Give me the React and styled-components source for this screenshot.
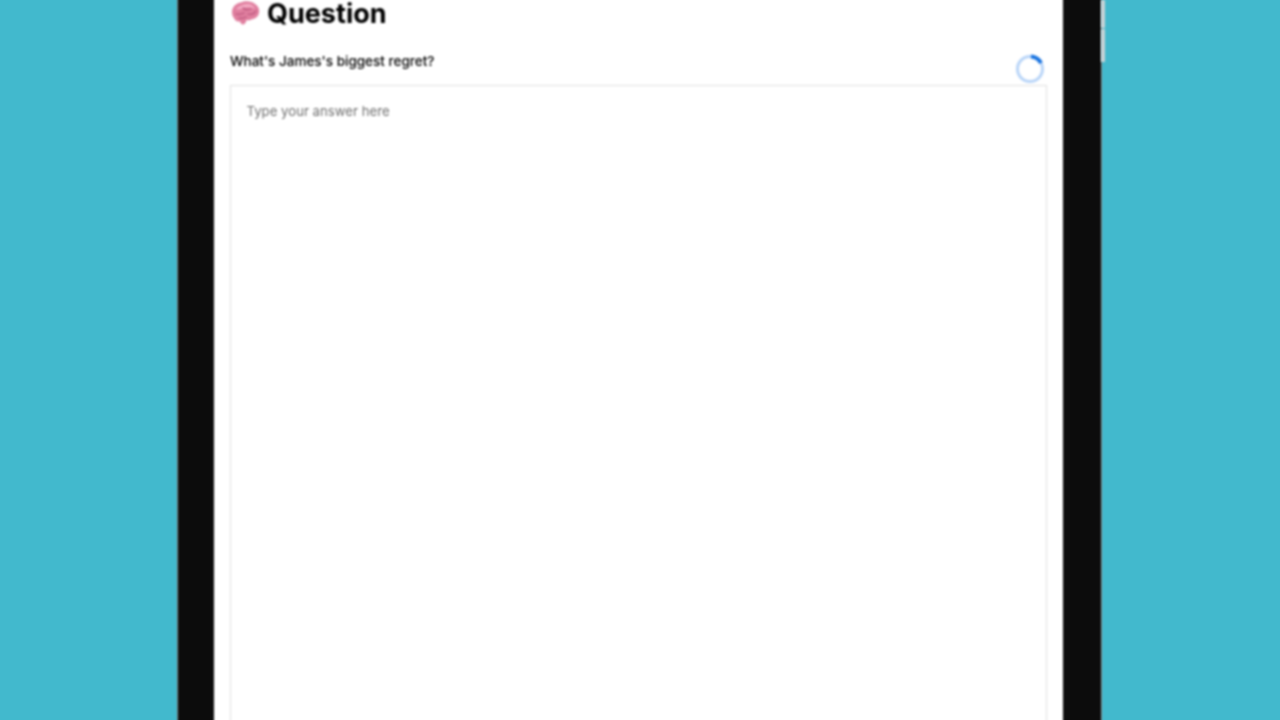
import React from 'react';
import styled, { createGlobalStyle } from 'styled-components';

const GlobalStyle = createGlobalStyle`
  html, body {
    margin: 0;
    height: 100%;
    overflow: hidden;
    background: #42b9cd;
  }
  #root {
    height: 100%;
  }
`;

const Page = styled.div`
  height: 720px;
  display: flex;
  overflow: hidden;
  background: #42b9cd;
  padding-left: 177px;
  box-sizing: border-box;
`;

const Device = styled.div`
  width: 925px;
  height: 724px;
  margin-top: -2px;
  flex-shrink: 0;
  display: flex;
  box-sizing: border-box;
  background: #0c0c0c;
  border-left: 1.5px solid #7a8588;
  border-right: 1.5px solid #8a9699;
  padding: 0 38.5px 0 35.5px;
  filter: blur(0.8px);
`;

const SideButton = styled.div`
  width: 4px;
  height: 66px;
  margin-left: -1px;
  display: flex;
  flex-direction: column;
  gap: 1px;
  filter: blur(0.8px);
`;

const ButtonPiece = styled.div`
  height: ${(props) => props.$height}px;
  background: #c9d3d6;
`;

const Screen = styled.div`
  flex: 1;
  background: #ffffff;
  padding: 2px 16px 0;
  display: flex;
  flex-direction: column;
  font-family: Inter, 'Liberation Sans', sans-serif;
`;

const Heading = styled.h1`
  margin: 0;
  height: 27px;
  display: flex;
  align-items: center;
  gap: 6.5px;
  font-size: 27px;
  line-height: 27px;
  font-weight: 700;
  color: #000000;
`;

const QuestionRow = styled.div`
  height: 58px;
  display: flex;
  justify-content: space-between;
  align-items: flex-start;
`;

const QuestionText = styled.div`
  margin-top: 26px;
  margin-left: 0.5px;
  font-size: 13.5px;
  line-height: 16px;
  font-weight: 550;
  color: #000000;
`;

const Spinner = styled.svg`
  width: 30px;
  height: 30px;
  margin-top: 27px;
  margin-right: 2px;
`;

const AnswerBox = styled.div`
  flex: 1;
  border: 1.5px solid #e0e0e0;
  border-bottom: none;
  padding: 15.5px 16px;
`;

const Placeholder = styled.div`
  font-size: 13.2px;
  line-height: 18px;
  color: #6e6e6e;
`;

const BrainIcon = () => (
  <svg width="31" height="27" viewBox="0 0 31 27" aria-hidden="true">
    <path
      d="M2 12C2 7 6 3 11 2.5 15 .5 22 1 25 4c3 2 5 5 4 9-1 4-4 6-8 6.500-1 1-3 1-4.500.5-.5 2-1 4-3 4.500-2 .5-3-1.500-3.500-3-2 .5-5-.5-6-3.500C2.500 16.500 2 14 2 12z"
      fill="#e07f9f"
    />
    <path
      d="M6 9c3-3 7-5 12-5 3 0 6 2 7 5-4-2-8-2-11-1-3 1-6 2-8 1z"
      fill="#f3abc3"
    />
    <path
      d="M6 14c3 1 6 0 8-1M13 8c2 2 5 2 8 1M18 14c3 1 6 0 8-3M9 18c3 1 5 0 7-1"
      fill="none"
      stroke="#b9557c"
      strokeWidth="1.3"
      strokeLinecap="round"
    />
  </svg>
);

export default function App() {
  return (
    <>
      <GlobalStyle />
      <Page>
        <Device>
          <Screen>
            <Heading>
              <BrainIcon />
              Question
            </Heading>
            <QuestionRow>
              <QuestionText>What's James's biggest regret?</QuestionText>
              <Spinner viewBox="0 0 30 30">
                <circle cx="15" cy="15" r="12.5" fill="none" stroke="#b9d5f8" strokeWidth="3" />
                <path
                  d="M16 2.500A12.500 12.500 0 0 1 26 9"
                  fill="none"
                  stroke="#1a74e0"
                  strokeWidth="4"
                />
              </Spinner>
            </QuestionRow>
            <AnswerBox>
              <Placeholder>Type your answer here</Placeholder>
            </AnswerBox>
          </Screen>
        </Device>
        <SideButton>
          <ButtonPiece $height={28} />
          <ButtonPiece $height={33} />
        </SideButton>
      </Page>
    </>
  );
}
